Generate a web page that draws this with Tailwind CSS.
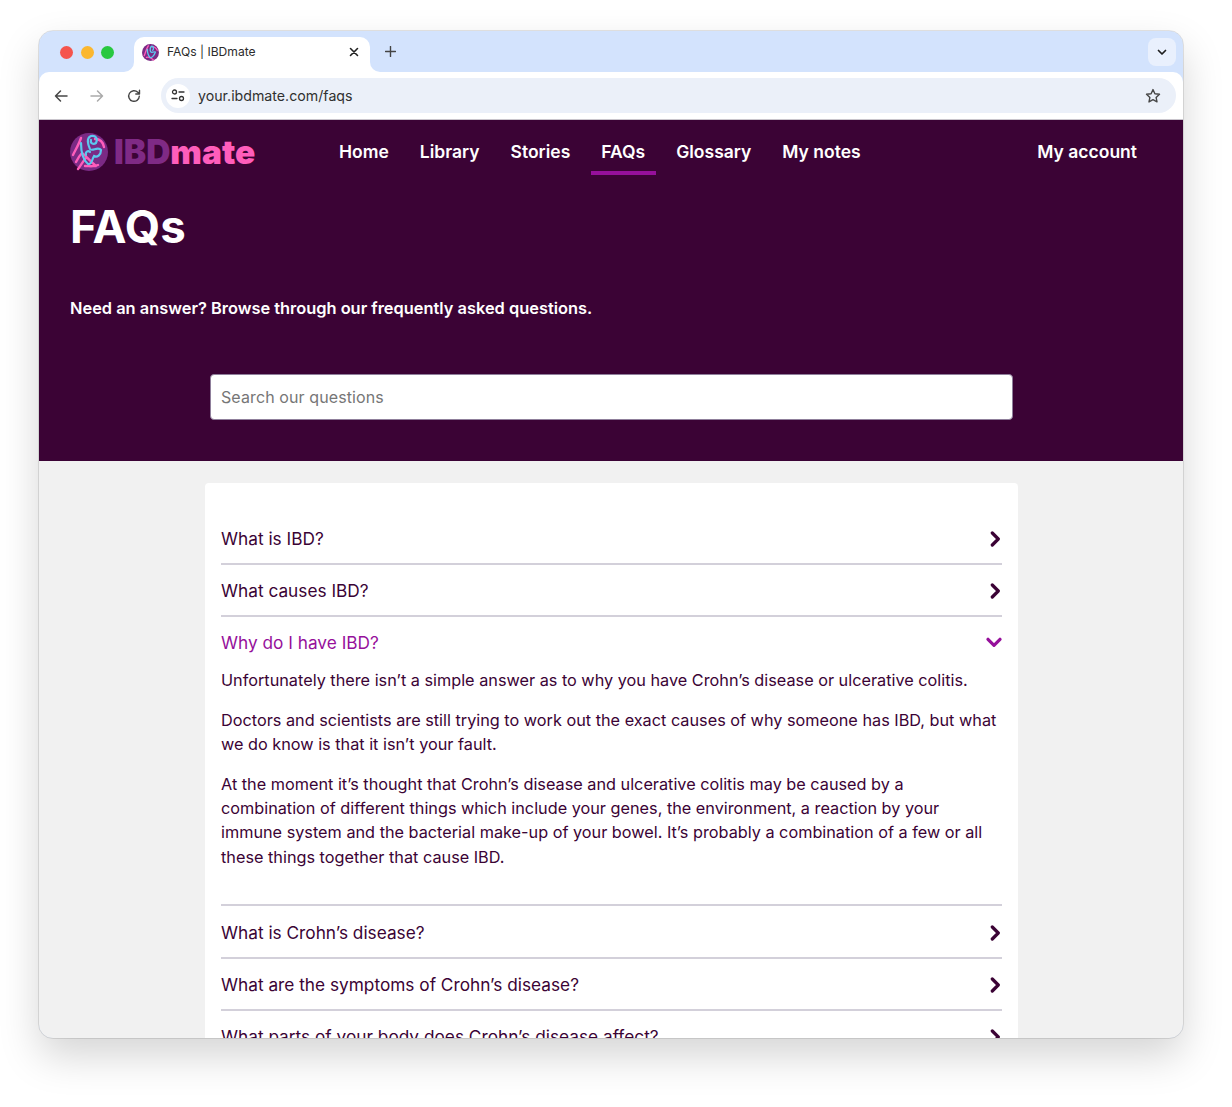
<!DOCTYPE html>
<html lang="en">
<head>
  <meta charset="UTF-8" />
  <title>FAQs | IBDmate</title>
  <script src="https://cdn.jsdelivr.net/npm/@tailwindcss/browser@4"></script>
</head>
<body class="bg-white h-[1107px] overflow-hidden font-['Inter',sans-serif]">
  <div class="pt-[31px] pl-[39px]">
    <!-- Browser window -->
    <div class="w-[1144px] h-[1007px] rounded-[14px] overflow-hidden shadow-[0_18px_40px_rgba(0,0,0,0.17)] outline outline-black/10 flex flex-col bg-[#d3e3fd]">
      <!-- Tab strip -->
      <div class="h-[41px] flex items-start shrink-0 relative">
        <div class="flex gap-[7.5px] pl-[21px] pt-[15px] w-[95px] shrink-0">
          <span class="w-[13px] h-[13px] rounded-full bg-[#f5544d]"></span>
          <span class="w-[13px] h-[13px] rounded-full bg-[#fbb72f]"></span>
          <span class="w-[13px] h-[13px] rounded-full bg-[#28c840]"></span>
        </div>
        <div class="relative mt-[6px] w-[236px] h-[35px] bg-white rounded-t-[10px] flex items-center pl-[8px] pr-[11px] pb-[5px] text-[12.1px] text-[#2c2c2c]">
          <span class="absolute left-[-10px] bottom-0 w-[10px] h-[10px] bg-white"><span class="block w-full h-full bg-[#d3e3fd] rounded-br-[10px]"></span></span>
          <span class="absolute right-[-10px] bottom-0 w-[10px] h-[10px] bg-white"><span class="block w-full h-full bg-[#d3e3fd] rounded-bl-[10px]"></span></span>
          <svg class="w-[17px] h-[17px] shrink-0" viewBox="0 0 38 38">
            <circle cx="19" cy="19" r="19" fill="#7b2a85"/>
            <path d="M5 26C9 16 10 10 14 4M10 30c6-2 12 2 16 6M22 6c6 0 10 4 12 8" fill="none" stroke="#ff5dbb" stroke-width="3" stroke-linecap="round"/>
            <path d="M12 12c0 8 2 14 6 18 4 2 10-6 12-12-4-2-8 2-10 0-3-3-2-12 2-13 4 0 5 6 2 9" fill="none" stroke="#5cc8ee" stroke-width="3" stroke-linecap="round"/>
          </svg>
          <span class="ml-[8px] flex-1">FAQs | IBDmate</span>
          <svg class="w-[10px] h-[10px]" viewBox="0 0 10 10"><path d="M1.5 1.5l7 7M8.5 1.5l-7 7" stroke="#222" stroke-width="1.6" stroke-linecap="round"/></svg>
        </div>
        <svg class="w-[11px] h-[11px] ml-[15px] mt-[15px]" viewBox="0 0 11 11"><path d="M5.5 0.5v10M0.5 5.5h10" stroke="#444" stroke-width="1.4" stroke-linecap="round"/></svg>
        <div class="ml-auto mr-[7px] mt-[7px] w-[28px] h-[28px] rounded-[8px] bg-[#e9f0fd] flex items-center justify-center">
          <svg class="w-[10px] h-[7px]" viewBox="0 0 10 7"><path d="M1.5 1.5L5 5l3.5-3.5" fill="none" stroke="#1f1f1f" stroke-width="1.7" stroke-linecap="round" stroke-linejoin="round"/></svg>
        </div>
      </div>
      <!-- Toolbar -->
      <div class="h-[48px] bg-white rounded-t-[10px] flex items-center shrink-0 border-b border-[#c9c5cc] pl-[15px] pr-[7px]">
        <svg class="w-[14px] h-[14px]" viewBox="0 0 14 14"><path d="M13 7H1.5M6.5 2L1.5 7l5 5" fill="none" stroke="#474747" stroke-width="1.5" stroke-linecap="round" stroke-linejoin="round"/></svg>
        <svg class="w-[14px] h-[14px] ml-[22px]" viewBox="0 0 14 14"><path d="M1 7h11.5M7.5 2l5 5-5 5" fill="none" stroke="#aaa" stroke-width="1.5" stroke-linecap="round" stroke-linejoin="round"/></svg>
        <svg class="w-[14px] h-[14px] ml-[23px]" viewBox="0 0 14 14"><path d="M12.3 7.2a5.3 5.3 0 1 1-1.5-3.9L12.5 5M12.5 1.2V5H8.8" fill="none" stroke="#474747" stroke-width="1.4" stroke-linecap="round" stroke-linejoin="round"/></svg>
        <div class="ml-[20px] flex-1 h-[35px] rounded-full bg-[#ebf0f9] flex items-center pl-[5px] pr-[15px]">
          <span class="w-[24px] h-[24px] rounded-full bg-white flex items-center justify-center">
            <svg class="w-[14px] h-[13px]" viewBox="0 0 14 13"><circle cx="3.5" cy="3" r="2" fill="none" stroke="#333" stroke-width="1.3"/><path d="M8 3h5M1 9.5h5" stroke="#333" stroke-width="1.3" stroke-linecap="round"/><circle cx="10.5" cy="9.5" r="2" fill="none" stroke="#333" stroke-width="1.3"/></svg>
          </span>
          <span class="ml-[8px] text-[14.2px] text-[#303030] flex-1">your.ibdmate.com/faqs</span>
          <svg class="w-[16px] h-[16px]" viewBox="0 0 16 16"><path d="M8 1.6l1.9 4.2 4.6.5-3.4 3.1.9 4.5L8 11.7l-4 2.2.9-4.5-3.4-3.1 4.6-.5z" fill="none" stroke="#474747" stroke-width="1.4" stroke-linejoin="round"/></svg>
        </div>
      </div>
      <!-- Hero -->
      <header class="h-[341px] bg-[#3b0335] shrink-0 text-white pl-[31px]">
        <div class="flex items-start h-[55px]">
          <a class="flex items-center w-[259px] pt-[13px] shrink-0">
            <svg class="w-[38px] h-[38px] shrink-0" viewBox="0 0 38 38">
              <circle cx="19" cy="19" r="19" fill="#7b2a85"/>
              <path d="M3 22c3-6 6-11 8-17M6 29c2-4 5-8 6-9 3 2 8 8 14 13M8 36c3-4 5-8 8-11M25 6c5 0 8 3 9 8M15 33c5 0 9 1 13-1" fill="none" stroke="#ff5dbb" stroke-width="2.4" stroke-linecap="round"/>
              <path d="M11 10c0 8 2 17 7 21 4 1 4-5 6-8 3 2 7-1 7-6-3-4-9 2-11-1-2-4-4-11 1-13 5-1 7 3 5 7-3 2-6 0-5-3M16 22c-1-3 2-5 4-3" fill="none" stroke="#5cc8ee" stroke-width="2.2" stroke-linecap="round"/>
            </svg>
            <span class="ml-[6px] text-[33.5px] leading-[38px] font-black"><span class="text-[#7f2a85]">IBD</span><span class="text-[#ff5dbb]">mate</span></span>
          </a>
          <nav class="flex gap-[10px] flex-1 text-[17.5px] font-semibold leading-[24px] ml-[-0.5px]">
            <a class="h-[55px] px-[10.5px] pt-[20px]">Home</a>
            <a class="h-[55px] px-[10.5px] pt-[20px]">Library</a>
            <a class="h-[55px] px-[10.5px] pt-[20px]">Stories</a>
            <a class="h-[55px] px-[10.5px] pt-[20px] border-b-4 border-[#96109b]">FAQs</a>
            <a class="h-[55px] px-[10.5px] pt-[20px]">Glossary</a>
            <a class="h-[55px] px-[10.5px] pt-[20px]">My notes</a>
            <a class="h-[55px] pt-[20px] ml-auto mr-[46px]">My account</a>
          </nav>
        </div>
        <h1 class="text-[45.6px] leading-[54px] font-bold mt-[25px]">FAQs</h1>
        <p class="text-[16.4px] font-semibold leading-[24px] mt-[42px]">Need an answer? Browse through our frequently asked questions.</p>
        <div class="mt-[54px] ml-[140px] w-[803px] h-[46px] bg-white rounded-[4px] border border-[#8f7f9b] flex items-center pl-[10px] text-[16px] text-[#767676] tracking-[0.1px]">Search our questions</div>
      </header>
      <!-- FAQ list -->
      <main class="flex-1 overflow-hidden bg-[#f1f1f1] pl-[166px] pt-[22px]">
        <div class="w-[813px] bg-white rounded-t-[4px] pt-[30px] px-[16px] text-[#3b0335] text-[17.25px]">
          <div class="h-[52px] flex items-center justify-between border-b-2 border-[#d3d0da] pt-[2px]">
            <span>What is IBD?</span>
            <svg class="w-[11px] h-[16px] mr-[1px]" viewBox="0 0 11 16"><path d="M2.3 2l6 6-6 6" fill="none" stroke="#3b0335" stroke-width="3.2" stroke-linecap="round" stroke-linejoin="round"/></svg>
          </div>
          <div class="h-[52px] flex items-center justify-between border-b-2 border-[#d3d0da] pt-[2px]">
            <span>What causes IBD?</span>
            <svg class="w-[11px] h-[16px] mr-[1px]" viewBox="0 0 11 16"><path d="M2.3 2l6 6-6 6" fill="none" stroke="#3b0335" stroke-width="3.2" stroke-linecap="round" stroke-linejoin="round"/></svg>
          </div>
          <div class="border-b-2 border-[#d3d0da] h-[289px]">
            <div class="h-[50px] flex items-center justify-between text-[#96109b] pt-[2px]">
              <span>Why do I have IBD?</span>
              <svg class="w-[16px] h-[11px] mb-[2px]" viewBox="0 0 16 11"><path d="M2 2.3l6 6 6-6" fill="none" stroke="#96109b" stroke-width="3.2" stroke-linecap="round" stroke-linejoin="round"/></svg>
            </div>
            <div class="text-[16.25px] leading-[24.3px] space-y-[15.5px] pt-[1px]">
              <p>Unfortunately there isn’t a simple answer as to why you have Crohn’s disease or ulcerative colitis.</p>
              <p>Doctors and scientists are still trying to work out the exact causes of why someone has IBD, but what we do know is that it isn’t your fault.</p>
              <p>At the moment it’s thought that Crohn’s disease and ulcerative colitis may be caused by a combination of different things which include your genes, the environment, a reaction by your immune system and the bacterial make-up of your bowel. It’s probably a combination of a few or all these things together that cause IBD.</p>
            </div>
          </div>
          <div class="h-[53px] flex items-center justify-between border-b-2 border-[#d3d0da] pt-[2px]">
            <span>What is Crohn’s disease?</span>
            <svg class="w-[11px] h-[16px] mr-[1px]" viewBox="0 0 11 16"><path d="M2.3 2l6 6-6 6" fill="none" stroke="#3b0335" stroke-width="3.2" stroke-linecap="round" stroke-linejoin="round"/></svg>
          </div>
          <div class="h-[52px] flex items-center justify-between border-b-2 border-[#d3d0da] pt-[2px]">
            <span>What are the symptoms of Crohn’s disease?</span>
            <svg class="w-[11px] h-[16px] mr-[1px]" viewBox="0 0 11 16"><path d="M2.3 2l6 6-6 6" fill="none" stroke="#3b0335" stroke-width="3.2" stroke-linecap="round" stroke-linejoin="round"/></svg>
          </div>
          <div class="h-[52px] flex items-center justify-between border-b-2 border-[#d3d0da] pt-[2px]">
            <span>What parts of your body does Crohn’s disease affect?</span>
            <svg class="w-[11px] h-[16px] mr-[1px]" viewBox="0 0 11 16"><path d="M2.3 2l6 6-6 6" fill="none" stroke="#3b0335" stroke-width="3.2" stroke-linecap="round" stroke-linejoin="round"/></svg>
          </div>
        </div>
      </main>
    </div>
  </div>
</body>
</html>
